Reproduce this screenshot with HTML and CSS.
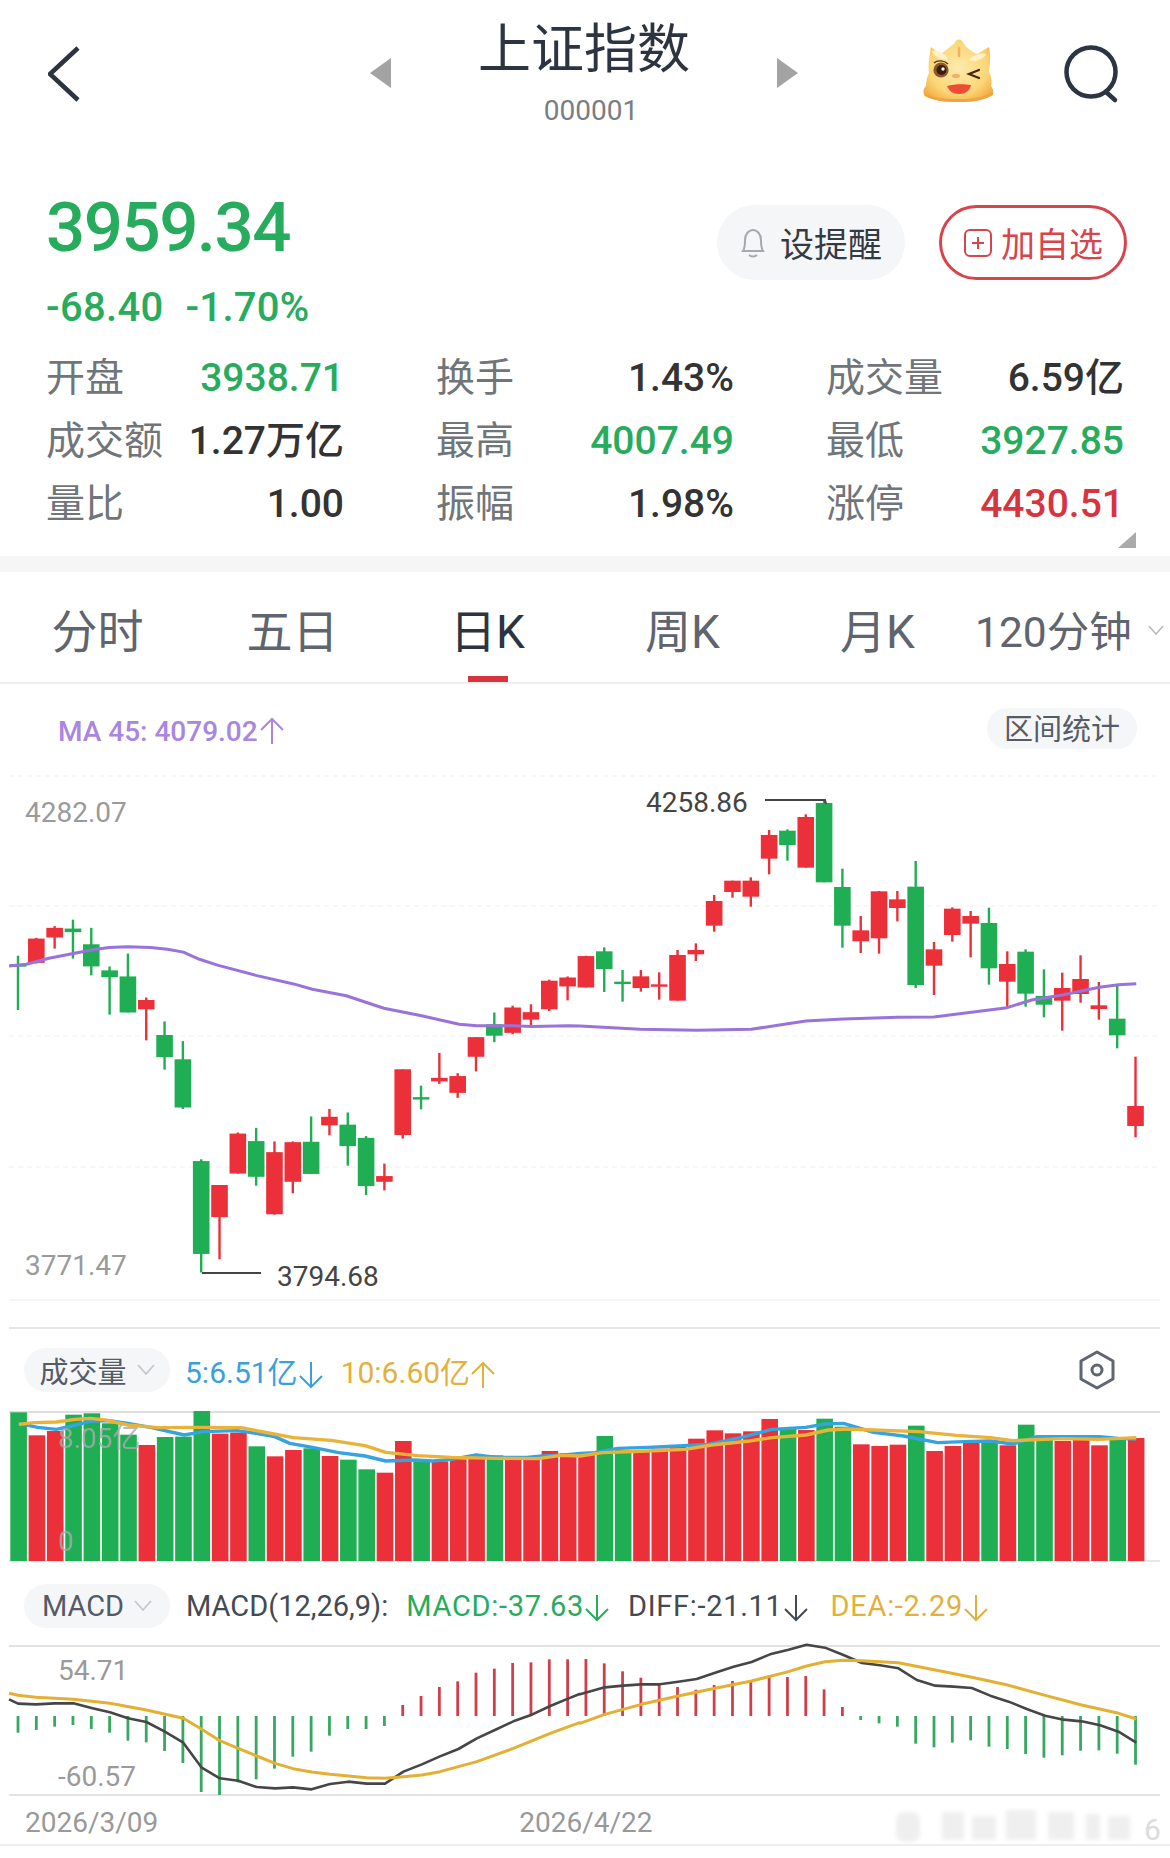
FILE: index.html
```html
<!DOCTYPE html>
<html lang="zh">

<head>
  <meta charset="UTF-8">
  <meta name="viewport" content="width=device-width, initial-scale=1.0">
  <title>上证指数</title>
  <link rel="stylesheet" href="styles.css">
</head>

<body>
  <svg class="defs" width="0" height="0">
    <symbol id="arrow-down" viewBox="0 0 26 30">
      <path d="M13 2V27M2 16L13 27L24 16" fill="none" stroke="currentColor" stroke-width="2"></path>
    </symbol>
    <symbol id="arrow-up" viewBox="0 0 26 30">
      <path d="M13 28V3M2 14L13 3L24 14" fill="none" stroke="currentColor" stroke-width="2"></path>
    </symbol>
    <symbol id="chevron" viewBox="0 0 18 12">
      <path d="M1 1L9 10L17 1" fill="none" stroke="currentColor" stroke-width="1.8"></path>
    </symbol>
  </svg>

  <header class="topbar">
    <svg class="back" viewBox="0 0 32 56">
      <path d="M30 2L2 28L30 54" fill="none" stroke="#2b3440" stroke-width="4.6"></path>
    </svg>
    <div class="topbar-mid">
      <div class="tri tri-left"></div>
      <div class="name">
        <div class="title">上证指数</div>
        <div class="code">000001</div>
      </div>
      <div class="tri tri-right"></div>
    </div>
    <div class="topbar-right">
      <svg class="mascot" viewBox="0 0 90 85">
        <defs>
          <radialGradient id="skin" cx="50%" cy="45%" r="60%">
            <stop offset="0" stop-color="#fdeaae"></stop>
            <stop offset="0.7" stop-color="#fbd676"></stop>
            <stop offset="1" stop-color="#f3b04a"></stop>
          </radialGradient>
          <filter id="mascot-soft"><feGaussianBlur stdDeviation="0.4"></feGaussianBlur></filter>
        </defs>
        <g filter="url(#mascot-soft)">
          <path d="M15 45C14 38 15 30 17 19C20 21 23 24 27 26C32 22 37 18 40 16C42 10 48 10 50 16C53 20 58 24 63 26C67 24 71 21 75 19C77 28 76 36 75 44C78 50 78 54 77 58C80 62 80 66 77 68C68 73 56 74 44 74C32 74 20 73 11 68C8 64 10 60 12 58C12 53 13 49 15 45Z" fill="url(#skin)"></path>
          <path d="M11 65C22 71 34 71 46 71C57 71 68 70 78 64C80 66 79 67 77 68C68 73 56 74 44 74C32 74 20 73 11 68C10 67 10 66 11 65Z" fill="#f0a53e"></path>
          <path d="M18 23C24 22 31 25 34 31C28 32 21 30 18 23ZM72 26C66 25 59 27 55 32C61 34 69 32 72 26Z" fill="#fff1c8"></path>
          <path d="M45 20L45 28" stroke="#eeb45c" stroke-width="2.500" stroke-linecap="round"></path>
          <circle cx="27" cy="42" r="7.600" fill="#8a5a2c"></circle>
          <circle cx="27.500" cy="42" r="5" fill="#3a1a10"></circle>
          <circle cx="29" cy="41" r="1.700" fill="#fff"></circle>
          <path d="M20 35C23 32 30 32 34 36" fill="none" stroke="#5a3418" stroke-width="1.400"></path>
          <path d="M65 42L55 46L65 50" fill="none" stroke="#4a2414" stroke-width="2.200" stroke-linecap="round"></path>
          <ellipse cx="42" cy="48" rx="4" ry="2.200" fill="#efb466"></ellipse>
          <path d="M33 58C40 56 50 56 57 57C56 63 51 66 45 66C39 66 35 63 33 58Z" fill="#ee4b35"></path>
        </g>
      </svg>
      <svg class="search" viewBox="0 0 56 60">
        <circle cx="27" cy="27" r="24.500" fill="none" stroke="#2b3440" stroke-width="4.500"></circle>
        <path d="M42 47L51 55" fill="none" stroke="#2b3440" stroke-width="4.500" stroke-linecap="round"></path>
      </svg>
    </div>
  </header>

  <section class="quote">
    <div class="quote-top">
      <div>
        <div class="price up">3959.34</div>
        <div class="change up"><span>-68.40</span><span>-1.70%</span></div>
      </div>
      <div class="actions">
        <div class="btn btn-remind">
          <svg class="bell" viewBox="0 0 26 30">
            <path d="M3 23C5 20 5 17 5 12C5 6 9 2 13 2C17 2 21 6 21 12C21 17 21 20 23 23Z" fill="none" stroke="#a5a8ac" stroke-width="2"></path>
            <path d="M9 27C11 29 15 29 17 27" fill="none" stroke="#a5a8ac" stroke-width="2"></path>
          </svg>
          设提醒
        </div>
        <div class="btn btn-add">
          <svg class="plus" viewBox="0 0 30 30">
            <rect x="2" y="2" width="26" height="26" rx="5" fill="none" stroke="#d6444c" stroke-width="2"></rect>
            <path d="M15 9V21M9 15H21" fill="none" stroke="#d6444c" stroke-width="2"></path>
          </svg>
          加自选
        </div>
      </div>
    </div>
    <div class="stats">
      <div class="stat"><span class="label">开盘</span><span class="val up">3938.71</span></div>
      <div class="stat"><span class="label">换手</span><span class="val">1.43%</span></div>
      <div class="stat"><span class="label">成交量</span><span class="val">6.59亿</span></div>
      <div class="stat"><span class="label">成交额</span><span class="val">1.27万亿</span></div>
      <div class="stat"><span class="label">最高</span><span class="val up">4007.49</span></div>
      <div class="stat"><span class="label">最低</span><span class="val up">3927.85</span></div>
      <div class="stat"><span class="label">量比</span><span class="val">1.00</span></div>
      <div class="stat"><span class="label">振幅</span><span class="val">1.98%</span></div>
      <div class="stat"><span class="label">涨停</span><span class="val down">4430.51</span></div>
    </div>
    <div class="expand"></div>
  </section>

  <div class="band"></div>

  <nav class="tabs">
    <div class="tab">分时</div>
    <div class="tab">五日</div>
    <div class="tab active">日K</div>
    <div class="tab">周K</div>
    <div class="tab">月K</div>
    <div class="tab tab-more">120分钟<svg class="chev" width="16" height="11"><use href="#chevron"></use></svg></div>
  </nav>

  <div class="ma-row">
    <div class="ma">MA 45: 4079.02<svg class="arrow" width="26" height="30"><use href="#arrow-up"></use></svg></div>
    <div class="range">区间统计</div>
  </div>

  <svg id="kline" class="chart" width="1170" height="570" viewBox="0 760 1170 570"></svg>

  <div class="ind-row ind-vol">
    <div class="ind-pill">成交量<svg class="chev" width="18" height="12"><use href="#chevron"></use></svg></div>
    <span class="blue">5:6.51亿<svg class="arrow" width="26" height="30"><use href="#arrow-down"></use></svg></span>
    <span class="yellow">10:6.60亿<svg class="arrow" width="26" height="30"><use href="#arrow-up"></use></svg></span>
    <svg class="gear" viewBox="0 0 36 40">
      <path d="M18 2L34 11V29L18 38L2 29V11Z" fill="none" stroke="#5f6670" stroke-width="3" stroke-linejoin="round"></path>
      <circle cx="18" cy="20" r="5" fill="none" stroke="#5f6670" stroke-width="3"></circle>
    </svg>
  </div>

  <svg id="volume" class="chart" width="1170" height="165" viewBox="0 1405 1170 165"></svg>

  <div class="ind-row ind-macd">
    <div class="ind-pill">MACD<svg class="chev" width="18" height="12"><use href="#chevron"></use></svg></div>
    <span class="dark params">MACD(12,26,9):</span>
    <span class="up">MACD:-37.63<svg class="arrow" width="26" height="30"><use href="#arrow-down"></use></svg></span>
    <span class="dark">DIFF:-21.11<svg class="arrow" width="26" height="30"><use href="#arrow-down"></use></svg></span>
    <span class="yellow dea">DEA:-2.29<svg class="arrow" width="26" height="30"><use href="#arrow-down"></use></svg></span>
  </div>

  <svg id="macd" class="chart" width="1170" height="160" viewBox="0 1640 1170 160"></svg>

  <div class="dates">
    <span>2026/3/09</span>
    <span>2026/4/22</span>
    <svg class="mark" width="270" height="38" viewBox="0 0 270 38">
      <filter id="soft"><feGaussianBlur stdDeviation="2"></feGaussianBlur></filter>
      <g fill="#efefef" filter="url(#soft)">
        <rect x="6" y="4" width="24" height="30" rx="8"></rect>
        <rect x="52" y="4" width="22" height="28"></rect>
        <rect x="82" y="8" width="24" height="24"></rect>
        <rect x="116" y="2" width="30" height="30"></rect>
        <rect x="158" y="4" width="26" height="28"></rect>
        <rect x="196" y="6" width="14" height="26"></rect>
        <rect x="218" y="8" width="22" height="24"></rect>
      </g>
      <text class="mark-num" x="254" y="32">6</text>
    </svg>
  </div>

  <script src="script.js"></script>
</body>

</html>
```

FILE: styles.css
```css
body {
  margin: 0;
  width: 1170px;
  background: #fff;
  font-family: Roboto, "Noto Sans CJK SC", sans-serif;
  color: #333;
}

.defs {
  position: absolute;
}

.up {
  color: #27ab5c;
}

.down {
  color: #d8343f;
}

.blue {
  color: #3aa0dc;
}

.yellow {
  color: #e2b13c;
}

.dark {
  color: #444a52;
}

/* top bar */
.topbar {
  display: grid;
  grid-template-columns: 1fr auto 1fr;
  align-items: center;
  height: 140px;
  padding: 0 50px 0 48px;
  box-sizing: border-box;
}

.back {
  width: 32px;
  height: 56px;
  margin-top: 8px;
}

.topbar-mid {
  display: flex;
  align-items: center;
  gap: 86px;
}

.tri {
  width: 21px;
  height: 30px;
  margin-top: 6px;
  background: #a3a3a3;
}

.tri-left {
  clip-path: polygon(100% 0, 100% 100%, 0 50%);
}

.tri-right {
  clip-path: polygon(0 0, 0 100%, 100% 50%);
}

.name {
  width: 214px;
  text-align: center;
}

.title {
  font-size: 53px;
  line-height: 64px;
  color: #2b3440;
  white-space: nowrap;
}

.code {
  font-size: 28px;
  line-height: 36px;
  margin-top: 11px;
  margin-bottom: -6px;
  padding-left: 14px;
  color: #7a7d82;
}

.topbar-right {
  display: flex;
  justify-content: flex-end;
  align-items: center;
  gap: 60px;
}

.mascot {
  width: 90px;
  height: 85px;
  margin: 0 0 0 -10px;
}

.search {
  width: 56px;
  height: 60px;
  margin-top: 10px;
}

/* quote block */
.quote {
  position: relative;
  height: 416px;
  padding: 52px 46px 0;
  box-sizing: border-box;
}

.quote-top {
  display: flex;
  justify-content: space-between;
  align-items: flex-start;
  height: 154px;
}

.price {
  font-size: 69px;
  font-weight: 500;
  line-height: 72px;
  letter-spacing: -1.5px;
}

.change {
  display: flex;
  gap: 22px;
  margin-top: 22px;
  font-size: 40px;
  font-weight: 500;
  line-height: 44px;
  letter-spacing: 0.3px;
}

.actions {
  display: flex;
  gap: 34px;
  margin: 13px -3px 0 0;
}

.btn {
  display: flex;
  align-items: center;
  justify-content: center;
  width: 188px;
  height: 75px;
  box-sizing: border-box;
  border-radius: 38px;
  font-size: 34px;
  gap: 8px;
}

.btn-remind {
  gap: 14px;
  background: #f5f6f8;
  color: #333a44;
}

.btn-add {
  border: 3px solid #d6444c;
  color: #d6444c;
}

.bell {
  width: 26px;
  height: 30px;
}

.plus {
  width: 30px;
  height: 30px;
}

.stats {
  display: grid;
  grid-template-columns: repeat(3, 298px);
  column-gap: 92px;
  grid-auto-rows: 63px;
  align-items: center;
}

.stat {
  display: flex;
  justify-content: space-between;
  align-items: center;
  font-size: 39px;
  line-height: 46px;
  font-weight: 500;
}

.label {
  color: #70757a;
  font-size: 39px;
  font-weight: 400;
}

.stat .val {
  white-space: nowrap;
}

.expand {
  position: absolute;
  right: 34px;
  bottom: 8px;
  width: 18px;
  height: 16px;
  background: #a9abab;
  clip-path: polygon(100% 0, 100% 100%, 0 100%);
}

.band {
  height: 16px;
  background: #f6f6f6;
}

/* period tabs */
.tabs {
  display: grid;
  grid-template-columns: repeat(6, 195px);
  align-items: center;
  height: 112px;
  padding-top: 2px;
  box-sizing: border-box;
  border-bottom: 2px solid #eee;
  font-size: 46px;
  color: #5f656e;
}

.tab {
  position: relative;
  text-align: center;
  white-space: nowrap;
}

.tab.active {
  color: #2b3440;
}

.tab.active::after {
  content: "";
  position: absolute;
  left: 78px;
  bottom: -21px;
  width: 40px;
  height: 6px;
  background: #d8343f;
}

.tab-more {
  display: flex;
  align-items: center;
  gap: 16px;
  font-size: 42.500px;
}

.tab-more .chev {
  color: #bbb;
  margin-top: 4px;
}

.ma-row {
  display: flex;
  justify-content: space-between;
  align-items: flex-start;
  height: 76px;
  padding: 24px 33px 0 58px;
  box-sizing: border-box;
}

.ma {
  display: flex;
  align-items: center;
  height: 46px;
  font-size: 28px;
  font-weight: 500;
  color: #a886e2;
}

.arrow {
  flex: none;
  vertical-align: middle;
  margin-left: 1px;
}

.range {
  width: 150px;
  height: 41px;
  border-radius: 20px;
  background: #f5f6f8;
  font-size: 29px;
  line-height: 45px;
  text-align: center;
  color: #555c66;
}

.chart {
  display: block;
}

.ax {
  font-size: 28px;
  fill: #9a9a9a;
}

.peak {
  font-size: 28px;
  fill: #444;
}

.over {
  font-size: 28px;
  fill: #aaa;
  opacity: 0.8;
}

/* indicator header rows */
.ind-row {
  display: flex;
  align-items: center;
  gap: 18px;
  box-sizing: border-box;
  padding-left: 24px;
  font-size: 29px;
  letter-spacing: 0.7px;
  white-space: nowrap;
}

.ind-row .arrow {
  margin-left: 0;
}

.ind-vol {
  height: 75px;
  padding-top: 5px;
  gap: 15px;
  font-size: 30px;
  letter-spacing: 0;
}

.ind-vol .yellow {
  margin-left: 2px;
}

.ind-macd {
  height: 70px;
  padding-top: 2px;
}

.params {
  margin-left: -2px;
  letter-spacing: 0;
}

.dea {
  margin-left: 4px;
}

.ind-pill {
  display: flex;
  align-items: center;
  justify-content: center;
  gap: 10px;
  width: 146px;
  height: 44px;
  border-radius: 22px;
  background: #f5f6f8;
  font-size: 29px;
  letter-spacing: 0;
  color: #545b66;
}

.ind-pill .chev {
  color: #c4c7cb;
}

.gear {
  width: 36px;
  height: 40px;
  margin-left: auto;
  margin-right: 55px;
}

.dates {
  position: relative;
  display: flex;
  align-items: center;
  gap: 361px;
  height: 44px;
  padding-left: 25px;
  border-bottom: 2px solid #eee;
  font-size: 28px;
  color: #999;
}

.mark {
  position: absolute;
  top: 8px;
  right: 10px;
}

.mark-num {
  font-size: 30px;
  fill: #dcdcdc;
}
```

FILE: script.js
```js
var RED = '#ec3039';
var GREEN = '#1fae53';
var NS = 'http://www.w3.org/2000/svg';

// candle x positions, 62 days
function dayX(i) {
  return 18 + 18.32 * i;
}

// readings taken off two crops of the chart: left half and right half
function yLeft(v) {
  return 760 + v / 2.8;
}
function yRight(v) {
  return 760 + v / 3;
}
function xLeft(v) {
  return v / 2.657;
}
function xRight(v) {
  return 580 + v / 2.657;
}

function add(svg, tag, attrs, text) {
  var el = document.createElementNS(NS, tag);
  for (var k in attrs) {
    el.setAttribute(k, attrs[k]);
  }
  if (text) {
    el.textContent = text;
  }
  svg.appendChild(el);
  return el;
}

function polyline(svg, parts, color, width) {
  var pts = parts.map(function (p) {
    return p[0] + ',' + p[1];
  }).join(' ');
  add(svg, 'polyline', {
    points: pts, fill: 'none', stroke: color, 'stroke-width': width, 'stroke-linejoin': 'round'
  });
}

// [up?, high, low, open/close top, open/close bottom]
var candlesLeft = [
  ['g', 548, 700, 572, 578], ['r', 498, 570, 500, 568], ['r', 465, 528, 470, 497], ['g', 447, 556, 472, 482],
  ['g', 470, 603, 516, 578], ['g', 578, 713, 589, 608], ['g', 542, 707, 606, 707], ['r', 665, 785, 672, 698],
  ['g', 732, 867, 770, 832], ['g', 787, 977, 838, 973], ['g', 1118, 1435, 1123, 1383], ['r', 1190, 1398, 1190, 1280],
  ['r', 1043, 1158, 1046, 1158], ['g', 1030, 1192, 1067, 1167], ['r', 1068, 1273, 1098, 1272], ['r', 1068, 1213, 1070, 1181],
  ['g', 998, 1159, 1069, 1159], ['r', 977, 1051, 999, 1023], ['g', 987, 1136, 1021, 1081], ['g', 1053, 1218, 1058, 1193],
  ['r', 1130, 1205, 1165, 1181], ['r', 866, 1060, 866, 1050], ['g', 912, 978, 944, 950], ['r', 820, 907, 890, 900],
  ['r', 877, 946, 885, 932], ['r', 776, 872, 776, 831], ['g', 707, 790, 740, 772], ['r', 688, 768, 693, 764],
  ['r', 684, 742, 706, 727], ['r', 615, 703, 618, 698], ['r', 606, 673, 609, 634], ['r', 548, 637, 549, 637]
];
var candlesRight = [
  ['g', 562, 696, 574, 627], ['g', 630, 725, 665, 671], ['r', 630, 695, 649, 684], ['r', 637, 719, 673, 680],
  ['r', 570, 722, 585, 722], ['r', 550, 603, 570, 583], ['r', 405, 515, 423, 497], ['r', 362, 413, 362, 396],
  ['r', 352, 440, 362, 410], ['r', 210, 343, 225, 296], ['g', 208, 302, 212, 255], ['r', 163, 323, 171, 323],
  ['g', 118, 367, 129, 367], ['g', 326, 563, 381, 497], ['r', 468, 579, 511, 544], ['r', 393, 581, 394, 535],
  ['r', 393, 484, 418, 444], ['g', 303, 684, 380, 675], ['r', 546, 705, 568, 617], ['r', 442, 545, 446, 525],
  ['r', 453, 592, 468, 491], ['g', 443, 674, 489, 625], ['r', 574, 745, 612, 665], ['g', 568, 740, 575, 701],
  ['g', 628, 772, 708, 734], ['r', 638, 812, 684, 722], ['r', 586, 728, 657, 702], ['r', 666, 779, 736, 747],
  ['g', 675, 865, 776, 826], ['r', 890, 1132, 1038, 1098]
];

var maLeft = [[24, 577], [70, 572], [130, 555], [195, 542], [243, 532], [290, 525], [340, 523], [400, 525], [445, 530],
  [487, 538], [530, 558], [580, 575], [680, 603], [780, 627], [830, 642], [920, 660], [1020, 695], [1120, 716],
  [1220, 740], [1267, 744], [1364, 744], [1413, 746], [1511, 744], [1540, 745]];
var maRight = [[0, 798], [160, 808], [310, 811], [455, 808], [530, 795], [600, 783], [700, 777], [845, 772], [940, 771],
  [1040, 757], [1135, 743], [1200, 720], [1285, 704], [1380, 682], [1431, 674], [1478, 671]];

function drawKline() {
  var svg = document.getElementById('kline');

  [776, 906, 1036, 1167].forEach(function (y) {
    add(svg, 'line', { x1: 9, x2: 1160, y1: y, y2: y, stroke: '#f5f5f5', 'stroke-width': 1.5, 'stroke-dasharray': '5 4' });
  });
  add(svg, 'line', { x1: 9, x2: 1160, y1: 1300, y2: 1300, stroke: '#f5f5f5', 'stroke-width': 2 });
  add(svg, 'line', { x1: 9, x2: 1160, y1: 1328, y2: 1328, stroke: '#ddd', 'stroke-width': 1.5 });

  function candle(c, i, toY) {
    var color = c[0] == 'g' ? GREEN : RED;
    var x = dayX(i);
    add(svg, 'line', { x1: x, x2: x, y1: toY(c[1]), y2: toY(c[2]), stroke: color, 'stroke-width': 2.4 });
    add(svg, 'rect', { x: x - 8.3, y: toY(c[3]), width: 16.6, height: Math.max(toY(c[4]) - toY(c[3]), 2.4), fill: color });
  }
  candlesLeft.forEach(function (c, i) {
    candle(c, i, yLeft);
  });
  candlesRight.forEach(function (c, i) {
    candle(c, i + 32, yRight);
  });

  var ma = maLeft.map(function (p) {
    return [xLeft(p[0]), yLeft(p[1])];
  }).concat(maRight.map(function (p) {
    return [xRight(p[0]), yRight(p[1])];
  }));
  polyline(svg, ma, '#9a72dc', 3);

  add(svg, 'text', { class: 'ax', x: 25, y: 822 }, '4282.07');
  add(svg, 'text', { class: 'ax', x: 25, y: 1275 }, '3771.47');
  add(svg, 'text', { class: 'peak', x: 646, y: 812 }, '4258.86');
  add(svg, 'text', { class: 'peak', x: 277, y: 1286 }, '3794.68');
  add(svg, 'polyline', { points: '765,800 825,800 826,804', fill: 'none', stroke: '#444', 'stroke-width': 2 });
  add(svg, 'line', { x1: 202, x2: 261, y1: 1273, y2: 1273, stroke: '#444', 'stroke-width': 2 });
}

var vols = [
  ['g', 247], ['r', 316], ['r', 303], ['g', 254], ['g', 250], ['g', 280], ['g', 314], ['r', 345],
  ['g', 321], ['g', 320], ['g', 243], ['r', 311], ['r', 308], ['g', 349], ['r', 379], ['r', 360],
  ['g', 355], ['r', 378], ['g', 389], ['g', 418], ['r', 428], ['r', 333], ['g', 392], ['r', 394],
  ['r', 388], ['r', 385], ['g', 376], ['r', 385], ['r', 385], ['r', 363], ['r', 370], ['r', 368],
  ['g', 318], ['g', 360], ['r', 360], ['r', 356], ['r', 350], ['r', 326], ['r', 301], ['r', 310],
  ['r', 304], ['r', 267], ['g', 297], ['r', 300], ['g', 266], ['g', 290], ['r', 343], ['r', 348],
  ['r', 344], ['g', 287], ['r', 363], ['r', 348], ['r', 330], ['g', 330], ['r', 346], ['g', 284],
  ['g', 320], ['r', 333], ['r', 328], ['r', 346], ['g', 325], ['r', 324]
];

var vol5Left = [[50, 280], [100, 292], [150, 298], [190, 288], [240, 274], [290, 272], [340, 280], [400, 292], [490, 315],
  [540, 305], [630, 302], [680, 310], [730, 320], [770, 340], [830, 352], [900, 368], [970, 378], [1025, 393],
  [1100, 390], [1150, 393], [1200, 388], [1265, 375], [1320, 382], [1400, 382], [1440, 378], [1500, 375]];
var vol5Right = [[0, 370], [40, 368], [100, 355], [180, 352], [260, 348], [340, 343], [430, 322], [510, 298], [600, 292],
  [650, 282], [700, 280], [780, 307], [860, 318], [950, 338], [1020, 335], [1090, 333], [1150, 342], [1215, 320],
  [1380, 320], [1430, 325], [1478, 327]];
var vol10Left = [[50, 283], [90, 278], [150, 276], [200, 268], [240, 265], [280, 270], [340, 285], [420, 293], [520, 292],
  [640, 293], [700, 306], [780, 323], [880, 331], [970, 347], [1025, 367], [1110, 377], [1200, 382], [1320, 385],
  [1430, 386], [1490, 376]];
var vol10Right = [[0, 378], [60, 368], [180, 363], [280, 358], [350, 345], [450, 333], [510, 323], [600, 315], [660, 300],
  [710, 297], [780, 300], [900, 305], [1000, 316], [1090, 323], [1150, 332], [1280, 326], [1380, 328], [1478, 323]];

function drawVolume() {
  var svg = document.getElementById('volume');
  var base = 1330 + 693 / 3;

  add(svg, 'line', { x1: 9, x2: 1160, y1: 1412, y2: 1412, stroke: '#ddd', 'stroke-width': 2 });
  add(svg, 'line', { x1: 9, x2: 1160, y1: base, y2: base, stroke: '#e8e8e8', 'stroke-width': 2 });

  vols.forEach(function (v, i) {
    var top = 1330 + v[1] / 3;
    add(svg, 'rect', {
      x: 18.6 + 18.32 * i - 8.3, y: top, width: 16.6, height: base - top, fill: v[0] == 'g' ? GREEN : RED
    });
  });

  function join(left, right) {
    return left.map(function (p) {
      return [xLeft(p[0]), 1330 + p[1] / 3];
    }).concat(right.map(function (p) {
      return [xRight(p[0]), 1330 + p[1] / 3];
    }));
  }
  polyline(svg, join(vol5Left, vol5Right), '#35a3df', 3.4);
  polyline(svg, join(vol10Left, vol10Right), '#e9b33a', 3.4);

  add(svg, 'text', { class: 'over', x: 58, y: 1448 }, '8.05亿');
  add(svg, 'text', { class: 'over', x: 58, y: 1551 }, '0');
}

var macdBars = [
  488, 480, 470, 465, 477, 488, 512, 517, 543, 579, 666, 675, 637, 628, 596, 560, 545, 497, 477, 477, 468,
  405, 378, 351, 334, 308, 296, 279, 277, 268, 268, 267, 280, 304, 323, 340, 351, 359, 345, 333, 330, 316,
  321, 318, 358, 411, 450, 460, 470, 521, 532, 518, 511, 530, 537, 552, 563, 556, 542, 541, 551, 584
];
var diffLeft = [[24, 388], [48, 401], [95, 403], [145, 400], [195, 400], [243, 414], [292, 427], [340, 445], [389, 456],
  [438, 485], [487, 518], [536, 593], [584, 625], [633, 632], [682, 651], [731, 655], [779, 652], [828, 658],
  [877, 642], [926, 635], [974, 641], [1023, 641], [1072, 605], [1121, 583], [1169, 559], [1218, 537], [1267, 505],
  [1315, 480], [1364, 454], [1413, 434], [1462, 408], [1511, 385], [1540, 372]];
var diffRight = [[0, 373], [66, 352], [115, 347], [163, 343], [212, 343], [261, 335], [310, 327], [359, 308], [408, 290],
  [456, 276], [505, 253], [554, 239], [602, 224], [651, 233], [700, 255], [749, 279], [797, 286], [846, 295],
  [895, 330], [944, 347], [992, 350], [1041, 354], [1090, 377], [1139, 395], [1187, 417], [1236, 437], [1285, 449],
  [1333, 454], [1382, 466], [1431, 485], [1478, 518]];
var deaLeft = [[24, 370], [48, 376], [95, 382], [195, 388], [292, 400], [389, 420], [487, 445], [536, 478], [584, 512],
  [633, 535], [682, 558], [731, 580], [779, 596], [828, 606], [877, 613], [926, 618], [974, 623], [1023, 625],
  [1072, 620], [1121, 615], [1169, 605], [1267, 575], [1364, 535], [1462, 490], [1540, 458]];
var deaRight = [[0, 460], [66, 433], [163, 403], [261, 378], [359, 355], [456, 333], [554, 305], [602, 288], [651, 275],
  [700, 271], [749, 272], [846, 278], [944, 300], [1041, 322], [1139, 346], [1236, 376], [1333, 405], [1431, 430],
  [1478, 447]];

function drawMacd() {
  var svg = document.getElementById('macd');
  var zero = 1570 + 438 / 3;

  add(svg, 'line', { x1: 9, x2: 1160, y1: 1646, y2: 1646, stroke: '#e2e2e2', 'stroke-width': 2 });
  add(svg, 'line', { x1: 9, x2: 1160, y1: 1795, y2: 1795, stroke: '#e2e2e2', 'stroke-width': 2 });

  macdBars.forEach(function (v, i) {
    var y = 1570 + v / 3;
    add(svg, 'line', {
      x1: dayX(i), x2: dayX(i), y1: zero, y2: y, stroke: y > zero ? '#36a862' : '#cf3f4b', 'stroke-width': 2.8
    });
  });

  function join(left, right) {
    return left.map(function (p) {
      return [xLeft(p[0]), 1570 + p[1] / 3];
    }).concat(right.map(function (p) {
      return [xRight(p[0]), 1570 + p[1] / 3];
    }));
  }
  polyline(svg, join(diffLeft, diffRight), '#464646', 2.6);
  polyline(svg, join(deaLeft, deaRight), '#e3b033', 3);

  add(svg, 'text', { class: 'ax', x: 58, y: 1680 }, '54.71');
  add(svg, 'text', { class: 'ax', x: 58, y: 1786 }, '-60.57');
}

drawKline();
drawVolume();
drawMacd();
```
